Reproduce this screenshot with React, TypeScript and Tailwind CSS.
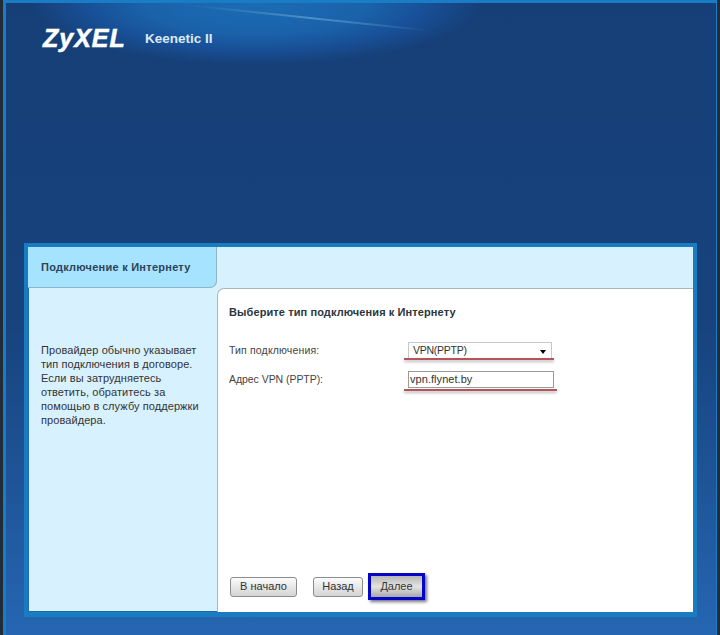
import React from 'react';

const sidebarLines = [
  'Провайдер обычно указывает',
  'тип подключения в договоре.',
  'Если вы затрудняетесь',
  'ответить, обратитесь за',
  'помощью в службу поддержки',
  'провайдера.',
];

const RedLine = ({ className }: { className: string }) => (
  <span className={`absolute h-[2px] bg-[#b5545a] shadow-[0_2px_3px_rgba(0,0,0,0.3)] ${className}`} />
);

const PlainButton = ({ label, className }: { label: string; className: string }) => (
  <button className={`h-[20px] rounded-[3px] border border-[#8c8c8c] bg-gradient-to-b from-[#fbfbfb] to-[#d4d4d4] text-[11px] leading-none text-[#333] ${className}`}>
    {label}
  </button>
);

export default function App() {
  return (
    <div className="w-[720px] h-[635px] overflow-hidden bg-[#222c36] font-['Liberation_Sans',Arial,sans-serif]">
      <div className="ml-[3px] mr-[3px] h-full border-l-[3px] border-r-[1px] border-t-[3px] border-[#1a7cc4] bg-gradient-to-b from-[#163f77] via-[#17427c] to-[#2566b2] flex flex-col">
        {/* Header */}
        <div className="relative h-[240px] shrink-0 overflow-hidden bg-[radial-gradient(ellipse_225px_62px_at_250px_0px,#1b6cb4_0%,#1a62aa_50%,#184f96_76%,rgba(22,66,122,0)_100%)]">
          <span className="absolute left-[184px] top-[14px] h-[2px] w-[240px] rotate-[6deg] blur-[0.5px] bg-gradient-to-r from-transparent via-[#4d8fc8] to-transparent" />
          <div className="relative flex items-center pl-[37px] pt-[20px]">
            <span className="w-[81px] text-[25px] leading-[30px] font-bold italic tracking-[1px] text-white [-webkit-text-stroke:0.6px_white]">ZyXEL</span>
            <span className="ml-[21px] mt-[3px] text-[13.5px] font-bold text-[#dbe9f7]">Keenetic II</span>
          </div>
        </div>

        {/* Panel */}
        <div className="ml-[18px] mr-[19px] h-[374px] border-[4px] border-[#1a7cc0] border-b-[5px] shadow-[inset_0_0_0_1px_#1f6aa8] flex flex-col bg-[#d8f1ff]">
          <div className="h-[41px] shrink-0 flex bg-[#d8f1ff]">
            <div className="w-[189px] flex items-center pl-[13px] rounded-br-[7px] bg-[#a6e3ff] border-b border-r border-[#8cb5c9] text-[11px] font-bold tracking-[0.25px] text-[#2d4359]">
              Подключение к Интернету
            </div>
          </div>
          <div className="flex-1 flex min-h-0">
            <div className="w-[189px] shrink-0 pl-[13px] pt-[55px] text-[11px] leading-[14px] tracking-[0.08px] text-[#333]">
              {sidebarLines.map(line => (
                <div key={line}>{line}</div>
              ))}
            </div>
            <div className="flex-1 flex flex-col rounded-tl-[7px] border-l border-t border-[#a9b5bb] bg-white pl-[11px] pb-[12px]">
              <h2 className="mt-[17px] text-[11px] leading-[13px] font-bold tracking-[0.1px] text-[#2b3640]">
                Выберите тип подключения к Интернету
              </h2>
              <div className="mt-[23px] flex items-center h-[17px] text-[10.5px] text-[#444]">
                <span className="w-[179px] tracking-[0.15px]">Тип подключения:</span>
                <div className="relative w-[144px] h-[17px] border border-[#c8c8c8] pl-[4px] pr-[5px] flex items-center justify-between tracking-[-0.25px] text-[#333]">
                  <span>VPN(PPTP)</span>
                  <span className="mt-[3px] h-0 w-0 border-x-[3.5px] border-t-[4px] border-x-transparent border-t-black" />
                  <RedLine className="left-[-5px] top-[15px] w-[150px]" />
                </div>
              </div>
              <div className="mt-[12px] flex items-center h-[17px] text-[10.5px] text-[#444]">
                <span className="w-[179px] tracking-[-0.05px]">Адрес VPN (PPTP):</span>
                <div className="relative w-[146px] h-[17px] border border-[#9a9a9a] pl-[1px] flex items-center text-[11px] tracking-[0.05px] text-[#333]">
                  <span>vpn.flynet.by</span>
                  <RedLine className="left-[-5px] top-[17px] w-[153px]" />
                </div>
              </div>
              <div className="mt-auto flex items-center">
                <PlainButton label="В начало" className="ml-[1px] w-[67px]" />
                <PlainButton label="Назад" className="ml-[16px] w-[50px]" />
                <div className="ml-[5px] border-[3px] border-[#0505c8] shadow-[2px_2px_3px_rgba(0,0,40,0.55)]">
                  <button className="block h-[21px] w-[51px] bg-gradient-to-b from-[#b5b5b5] via-[#e4e4e4] to-[#a8a8a8] text-[11px] leading-none text-[#333]">
                    Далее
                  </button>
                </div>
              </div>
            </div>
          </div>
        </div>
      </div>
    </div>
  );
}
